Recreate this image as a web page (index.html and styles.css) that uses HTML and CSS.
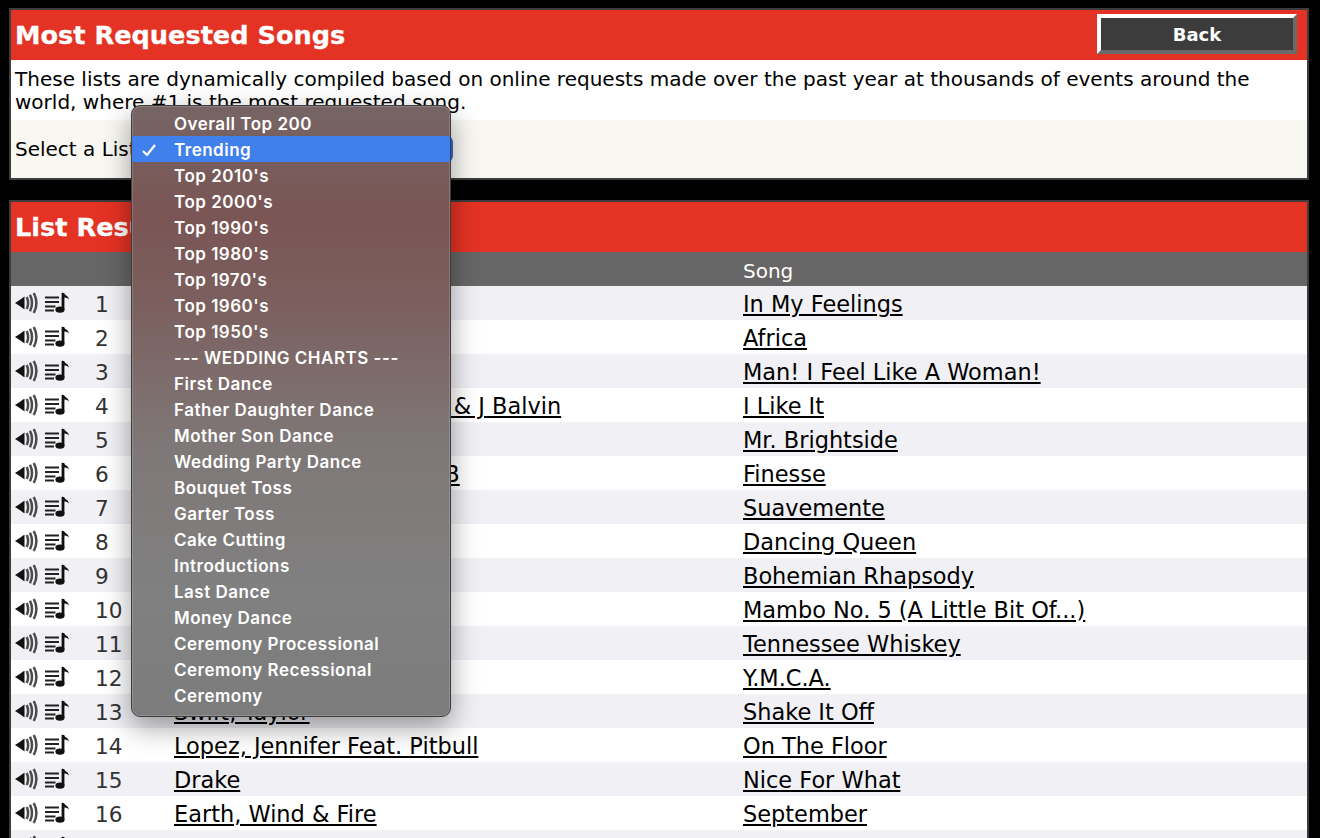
FILE: index.html
```html
<!DOCTYPE html>
<html lang="en">
<head>
<meta charset="utf-8">
<title>Most Requested Songs</title>
<link rel="stylesheet" href="styles.css">
</head>
<body>
<svg class="defs" width="0" height="0" aria-hidden="true">
  <symbol id="speaker" viewBox="0 0 24 22">
    <path d="M0 11 L4 8.5 L9.5 4.5 V17.5 L4 13.5 Z" fill="#111"/>
    <path d="M11.8 5 Q14.4 11 11.8 17 M15 2.8 Q19 11 15 19.2 M18.8 1 Q24 11 18.8 21" fill="none" stroke="#4a4a4a" stroke-width="2.5"/>
  </symbol>
  <symbol id="queue" viewBox="0 0 24 21">
    <path d="M0 5.5H14M0 10H14M0 14.5H10.5M0 18.5H9" fill="none" stroke="#222" stroke-width="2.2"/>
    <path d="M18 1 V17" fill="none" stroke="#111" stroke-width="2.8"/>
    <path d="M17.5 0 C19.5 3.5 23 3 24 7.5 C22 5.5 20.5 5.5 18 5.5 Z" fill="#111"/>
    <ellipse cx="15" cy="17.6" rx="4.6" ry="3.2" fill="#111"/>
  </symbol>
</svg>

<section class="panel panel-intro">
  <header class="bar">
    <h1 class="bar-title">Most Requested Songs</h1>
    <button class="back" type="button">Back</button>
  </header>
  <p class="intro">These lists are dynamically compiled based on online requests made over the past year at thousands of events around the world, where #1 is the most requested song.</p>
  <div class="picker">
    <span class="picker-label">Select a List:</span>
    <span class="select-stub"></span>
  </div>
</section>

<section class="panel panel-results">
  <header class="bar bar-results">
    <h2 class="bar-title">List Results</h2>
  </header>
  <div class="table">
    <div class="row head"><span></span><span></span><span>Artist</span><span>Song</span></div>
    <div class="row"><span class="ic"><svg class="i-s"><use href="#speaker"/></svg><svg class="i-q"><use href="#queue"/></svg></span><span class="num">1</span><a href="#">Drake</a><a href="#">In My Feelings</a></div>
    <div class="row"><span class="ic"><svg class="i-s"><use href="#speaker"/></svg><svg class="i-q"><use href="#queue"/></svg></span><span class="num">2</span><a href="#">Toto</a><a href="#">Africa</a></div>
    <div class="row"><span class="ic"><svg class="i-s"><use href="#speaker"/></svg><svg class="i-q"><use href="#queue"/></svg></span><span class="num">3</span><a href="#">Twain, Shania</a><a href="#">Man! I Feel Like A Woman!</a></div>
    <div class="row"><span class="ic"><svg class="i-s"><use href="#speaker"/></svg><svg class="i-q"><use href="#queue"/></svg></span><span class="num">4</span><a href="#">Cardi B Feat. Bad Bunny &amp; J Balvin</a><a href="#">I Like It</a></div>
    <div class="row"><span class="ic"><svg class="i-s"><use href="#speaker"/></svg><svg class="i-q"><use href="#queue"/></svg></span><span class="num">5</span><a href="#">The Killers</a><a href="#">Mr. Brightside</a></div>
    <div class="row"><span class="ic"><svg class="i-s"><use href="#speaker"/></svg><svg class="i-q"><use href="#queue"/></svg></span><span class="num">6</span><a href="#">Mars, Bruno Feat. Cardi B</a><a href="#">Finesse</a></div>
    <div class="row"><span class="ic"><svg class="i-s"><use href="#speaker"/></svg><svg class="i-q"><use href="#queue"/></svg></span><span class="num">7</span><a href="#">Crespo, Elvis</a><a href="#">Suavemente</a></div>
    <div class="row"><span class="ic"><svg class="i-s"><use href="#speaker"/></svg><svg class="i-q"><use href="#queue"/></svg></span><span class="num">8</span><a href="#">Abba</a><a href="#">Dancing Queen</a></div>
    <div class="row"><span class="ic"><svg class="i-s"><use href="#speaker"/></svg><svg class="i-q"><use href="#queue"/></svg></span><span class="num">9</span><a href="#">Queen</a><a href="#">Bohemian Rhapsody</a></div>
    <div class="row"><span class="ic"><svg class="i-s"><use href="#speaker"/></svg><svg class="i-q"><use href="#queue"/></svg></span><span class="num">10</span><a href="#">Bega, Lou</a><a href="#">Mambo No. 5 (A Little Bit Of...)</a></div>
    <div class="row"><span class="ic"><svg class="i-s"><use href="#speaker"/></svg><svg class="i-q"><use href="#queue"/></svg></span><span class="num">11</span><a href="#">Stapleton, Chris</a><a href="#">Tennessee Whiskey</a></div>
    <div class="row"><span class="ic"><svg class="i-s"><use href="#speaker"/></svg><svg class="i-q"><use href="#queue"/></svg></span><span class="num">12</span><a href="#">Village People</a><a href="#">Y.M.C.A.</a></div>
    <div class="row"><span class="ic"><svg class="i-s"><use href="#speaker"/></svg><svg class="i-q"><use href="#queue"/></svg></span><span class="num">13</span><a href="#">Swift, Taylor</a><a href="#">Shake It Off</a></div>
    <div class="row"><span class="ic"><svg class="i-s"><use href="#speaker"/></svg><svg class="i-q"><use href="#queue"/></svg></span><span class="num">14</span><a href="#">Lopez, Jennifer Feat. Pitbull</a><a href="#">On The Floor</a></div>
    <div class="row"><span class="ic"><svg class="i-s"><use href="#speaker"/></svg><svg class="i-q"><use href="#queue"/></svg></span><span class="num">15</span><a href="#">Drake</a><a href="#">Nice For What</a></div>
    <div class="row"><span class="ic"><svg class="i-s"><use href="#speaker"/></svg><svg class="i-q"><use href="#queue"/></svg></span><span class="num">16</span><a href="#">Earth, Wind &amp; Fire</a><a href="#">September</a></div>
    <div class="row row-last"><span class="ic"><svg class="i-s"><use href="#speaker"/></svg><svg class="i-q"><use href="#queue"/></svg></span></div>
  </div>
</section>

<ul class="menu">
  <li>Overall Top 200</li>
  <li class="sel"><svg class="check" viewBox="0 0 14 12"><path d="M1 7 L5 11 L13 1"/></svg>Trending</li>
  <li>Top 2010's</li>
  <li>Top 2000's</li>
  <li>Top 1990's</li>
  <li>Top 1980's</li>
  <li>Top 1970's</li>
  <li>Top 1960's</li>
  <li>Top 1950's</li>
  <li>--- WEDDING CHARTS ---</li>
  <li>First Dance</li>
  <li>Father Daughter Dance</li>
  <li>Mother Son Dance</li>
  <li>Wedding Party Dance</li>
  <li>Bouquet Toss</li>
  <li>Garter Toss</li>
  <li>Cake Cutting</li>
  <li>Introductions</li>
  <li>Last Dance</li>
  <li>Money Dance</li>
  <li>Ceremony Processional</li>
  <li>Ceremony Recessional</li>
  <li>Ceremony</li>
</ul>
</body>
</html>
```
FILE: styles.css
```css
* { box-sizing: border-box; }
html, body { height: 100%; }
body {
  margin: 0;
  padding: 8px 9px 0;
  background: #000;
  color: #000;
  font-family: "DejaVu Sans", Verdana, sans-serif;
  font-size: 20px;
  overflow: hidden;
  position: relative;
}
.defs { position: absolute; }
.panel {
  border: 2px solid #3c3c3c;
  background: #fff;
  width: 1300px;
}
.panel-results { margin-top: 20px; }
.bar {
  height: 50px;
  background: #e43224;
  display: flex;
  align-items: center;
  justify-content: space-between;
  padding: 0 10px 0 4px;
}
.bar-title {
  margin: 0;
  color: #fff;
  font-size: 25.6px;
  font-weight: 700;
  line-height: 49px;
  -webkit-text-stroke: 0.3px #fff;
}
.back {
  width: 200px;
  height: 40px;
  margin-top: -2px;
  background: #3c3c3c;
  color: #fff;
  font: 700 18px "DejaVu Sans", Verdana, sans-serif;
  border-width: 4px;
  border-style: solid;
  border-color: #fff #6a6a6a #6a6a6a #fff;
}
.intro {
  margin: 0;
  padding: 8px 4px 0;
  height: 60px;
  line-height: 23px;
  font-size: 20.03px;
}
.picker {
  height: 58px;
  background: #f8f7f2;
  padding: 0 4px;
  display: flex;
  align-items: center;
  gap: 6px;
}
.picker-label {
  flex: 0 0 130px;
  min-width: 0;
  white-space: nowrap;
}
.select-stub {
  flex: 0 0 302px;
  height: 26px;
  background: #2f6de0;
  border-radius: 6px;
}
.table { display: block; }
.row {
  height: 34px;
  display: grid;
  grid-template-columns: 84px 79px 569px 1fr;
  align-items: center;
  background: #f0f0f5;
  padding-top: 2px;
  font-size: 22.45px;
}
.row:nth-child(odd) { background: #fff; }
.row a { color: #000; justify-self: start; }
.row.head {
  background: #666;
  color: #fff;
  font-size: 20px;
  padding-top: 3px;
}
.row-last { align-items: start; }
.row-last .ic { margin-top: 3px; }
.ic {
  display: flex;
  align-items: center;
  gap: 6px;
  padding-left: 4px;
  margin-top: -3px;
  filter: blur(0.35px);
}
.i-s { width: 24px; height: 22px; }
.i-q { width: 24px; height: 21px; }
.num { color: #333; font-size: 21.6px; }
.menu {
  position: absolute;
  left: 131px;
  top: 105px;
  width: 320px;
  height: 612px;
  margin: 0;
  padding: 4px 0 8px;
  list-style: none;
  color: #fff;
  font-family: Inter, "Noto Sans", sans-serif;
  font-size: 17px;
  font-weight: 600;
  letter-spacing: 0.5px;
  border: 1px solid #3d3d3d;
  border-radius: 9px;
  background: linear-gradient(180deg, #766565 0%, #7a5554 18%, #7b5f5e 32%, #7f7777 55%, #808080 80%, #7c7c7c 100%);
  box-shadow: inset 0 0 0 1px rgba(255,255,255,.16), 0 10px 28px rgba(0,0,0,.38);
}
.menu li {
  height: 26px;
  line-height: 28px;
  padding-left: 42px;
  position: relative;
  white-space: nowrap;
}
.menu li.sel { background: #4080ec; }
.check {
  position: absolute;
  left: 10px;
  top: 8px;
  width: 14px;
  height: 12px;
  fill: none;
  stroke: #fff;
  stroke-width: 2.2;
}
```
